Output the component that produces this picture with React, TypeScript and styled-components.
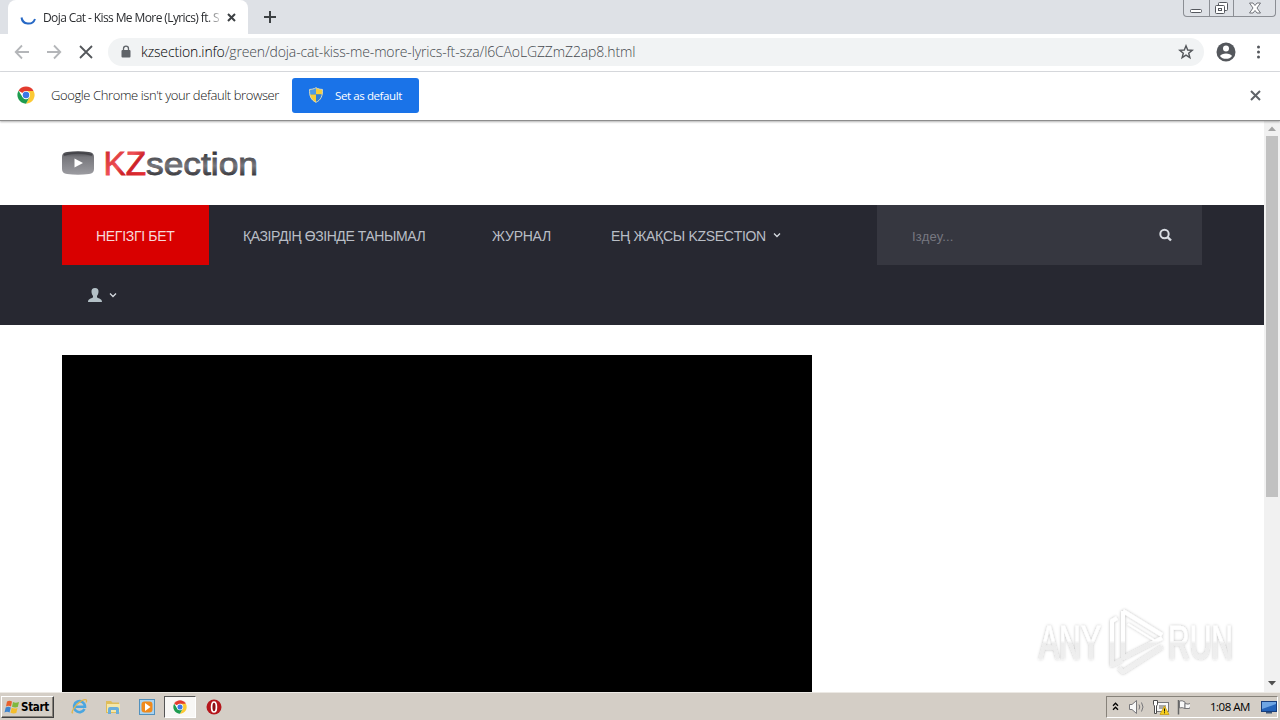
import React from 'react'
import styled, { createGlobalStyle } from 'styled-components'

const GlobalStyle = createGlobalStyle`
  * {
    box-sizing: border-box;
  }

  body {
    margin: 0;
    overflow: hidden;
    font-family: 'Open Sans', 'Noto Sans', sans-serif;
  }

  svg {
    display: block;
    flex-shrink: 0;
  }
`

const Desktop = styled.div`
  position: relative;
  display: flex;
  flex-direction: column;
  width: 1280px;
  height: 720px;
  overflow: hidden;
  background: #fff;
`

/* browser */

const TabStrip = styled.div`
  display: flex;
  height: 34px;
  padding-left: 8px;
  background: #dee1e6;
`

const Tab = styled.div`
  display: flex;
  align-items: center;
  width: 240px;
  padding: 0 11px 0 12px;
  background: #fff;
  border-radius: 8px 8px 0 0;
`

const TabTitle = styled.div`
  width: 178px;
  margin: 0 6px 0 7px;
  white-space: nowrap;
  font-size: 12px;
  letter-spacing: -0.6px;
  color: #2b2d30;
  mask-image: linear-gradient(to right, #000 163px, transparent 181px);
`

const NewTab = styled.div`
  display: flex;
  align-items: center;
  margin-left: 15px;
`

const WindowButtons = styled.div`
  display: flex;
  width: 93px;
  height: 17px;
  margin: 0 4px 0 auto;
  border: 1px solid #8b8e94;
  border-top: 0;
  border-radius: 0 0 4px 4px;
`

const WindowButton = styled.div<{ width: number }>`
  display: flex;
  justify-content: center;
  align-items: center;
  width: ${({ width }) => width}px;

  & + & {
    border-left: 1px solid #8b8e94;
  }
`

const Toolbar = styled.div`
  display: flex;
  align-items: center;
  height: 38px;
  padding: 0 14px 2px;
  border-bottom: 1px solid #dadce0;
`

const NavButtons = styled.div`
  display: flex;
  gap: 16px;
  margin-right: 14px;
`

const AddressBar = styled.div`
  display: flex;
  align-items: center;
  width: 1096px;
  height: 28px;
  padding: 0 10px 0 12px;
  border-radius: 14px;
  background: #f1f3f4;
`

const Url = styled.div`
  flex: 1;
  margin-left: 9px;
  white-space: nowrap;
  font-size: 14px;
  font-weight: 300;
  letter-spacing: -0.14px;
  color: #45494e;

  span {
    color: #000;
  }
`

const ToolbarEnd = styled.div`
  display: flex;
  align-items: center;
  gap: 14px;
  margin-left: 12px;
`

const InfoBar = styled.div`
  display: flex;
  align-items: center;
  height: 49px;
  padding: 0 19px 2px 17px;
  border-bottom: 1px solid #8d8d8d;
  box-shadow: 0 1px 2px rgba(0, 0, 0, 0.3);
  z-index: 1;
`

const InfoText = styled.div`
  width: 228px;
  margin: 0 13px 0 16px;
  white-space: nowrap;
  font-size: 13px;
  font-weight: 300;
  letter-spacing: -0.4px;
  color: #111;
`

const DefaultButton = styled.div`
  display: flex;
  align-items: center;
  width: 127px;
  height: 35px;
  padding-left: 16px;
  gap: 11px;
  border-radius: 3px;
  background: #1a73e8;
  color: #fff;
  font-size: 11.5px;
  letter-spacing: -0.4px;
  white-space: nowrap;
`

const InfoClose = styled.div`
  margin-left: auto;
`

/* page */

const Viewport = styled.div`
  display: flex;
  height: 571px;
`

const Page = styled.div`
  width: 1264px;
  overflow: hidden;
`

const Container = styled.div`
  width: 1140px;
  margin: 0 62px;
`

const SiteHeader = styled(Container)`
  display: flex;
  align-items: center;
  height: 84px;
`

const SiteNav = styled.div`
  height: 120px;
  background: #272831;
`

const NavRow = styled(Container)`
  display: flex;
  height: 60px;
`

const NavItem = styled.div<{ width: number; inset: number; spacing?: number; active?: boolean }>`
  display: flex;
  align-items: center;
  gap: 7px;
  width: ${({ width }) => width}px;
  padding: 1px 0 0 ${({ inset }) => inset}px;
  background: ${({ active }) => (active ? '#d90000' : 'transparent')};
  color: ${({ active }) => (active ? '#f6dada' : '#b9bec6')};
  font: 14px 'Liberation Sans', sans-serif;
  letter-spacing: ${({ spacing = 0 }) => spacing}px;
  white-space: nowrap;
`

const Search = styled.div`
  display: flex;
  align-items: center;
  justify-content: space-between;
  width: 325px;
  margin-left: auto;
  padding: 0 30px 0 35px;
  background: #363740;
  color: #777880;
  font: 13px 'Liberation Sans', sans-serif;
  letter-spacing: 0.2px;
`

const SearchLabel = styled.span`
  padding-top: 3px;
`

const Player = styled.div`
  width: 750px;
  height: 340px;
  margin: 30px 0 0 62px;
  background: #000;
`

const Scrollbar = styled.div`
  display: flex;
  flex-direction: column;
  align-items: center;
  width: 16px;
  padding: 5px 0 6px;
  background: #f1f1f1;
`

const Thumb = styled.div`
  width: 12px;
  height: 361px;
  margin: 5px 0 auto;
  background: #c1c1c1;
`

const Watermark = styled.svg`
  position: absolute;
  left: 1030px;
  top: 604px;
`

/* taskbar */

const Taskbar = styled.div`
  display: flex;
  align-items: center;
  height: 28px;
  padding: 0 2px 0 1px;
  background: #d4cec6;
  border-top: 1px solid #ece9e4;
`

const StartButton = styled.div`
  display: flex;
  align-items: center;
  gap: 1px;
  width: 53px;
  height: 22px;
  padding-left: 2px;
  border: 1px solid;
  border-color: #fff #404040 #404040 #fff;
  box-shadow: inset -1px -1px #87827a;
  font: bold 11.5px 'DejaVu Sans Condensed', 'DejaVu Sans', sans-serif;
  letter-spacing: -0.3px;
  color: #000;
`

const QuickLaunch = styled.div`
  display: flex;
  margin-left: 9px;
`

const TaskButton = styled.div<{ active?: boolean }>`
  display: flex;
  align-items: center;
  justify-content: center;
  width: 32px;
  height: 22px;
  margin-right: 1.8px;
  border: 1px solid;
  border-color: ${({ active }) => (active ? '#555 #fff #fff #555' : 'transparent')};
  background: ${({ active }) => (active ? '#f8f7f5' : 'transparent')};
`

const Tray = styled.div`
  display: flex;
  align-items: center;
  width: 172px;
  height: 22px;
  margin-left: auto;
  padding-left: 5px;
  border: 1px solid;
  border-color: #87827a #fff #fff #87827a;
`

const Clock = styled.div`
  width: 42px;
  margin: 0 9px 0 20px;
  font-size: 11.5px;
  letter-spacing: -0.5px;
  white-space: nowrap;
  color: #000;
`

const ChromeLogo = ({ size }: { size: number }) => (
  <svg width={size} height={size} viewBox="0 0 48 48">
    <circle cx="24" cy="24" r="23" fill="#fff" />
    <path d="M24 24 L4.1 12.5 A23 23 0 0 1 43.9 12.5 Z" fill="#e33b2e" />
    <path d="M24 13 H44.2 A23 23 0 0 1 24 47 L33.5 29.5 Z" fill="#fcc934" />
    <path d="M4.1 12.5 L14.5 29.5 L24 35 L33.5 29.5 L24 47 A23 23 0 0 1 4.1 12.5 Z" fill="#1e9c4f" />
    <circle cx="24" cy="24" r="11" fill="#fff" />
    <circle cx="24" cy="24" r="8.7" fill="#3b78e7" />
  </svg>
)

const Cross = ({ size, color, weight = 2 }: { size: number; color: string; weight?: number }) => (
  <svg width={size} height={size} viewBox={`0 0 ${size} ${size}`} stroke={color} strokeWidth={weight}>
    <path d={`M1 1 L${size - 1} ${size - 1} M${size - 1} 1 L1 ${size - 1}`} />
  </svg>
)

const Caret = () => (
  <svg width="8" height="8" viewBox="0 0 8 8" fill="none" stroke="#d6dbe0" strokeWidth="1.3">
    <path d="M1 1.500 L4 4.500 L7 1.500" />
  </svg>
)

const Shield = () => (
  <svg width="16" height="16" viewBox="0 0 16 16">
    <path d="M8 1 C6 2 3.5 2.3 1.5 2.3 C1.4 4.500 1.3 6 1.6 7.500 H8 Z" fill="#4d9be6" />
    <path d="M8 1 C10 2 12.5 2.3 14.5 2.3 C14.6 4.500 14.7 6 14.4 7.500 H8 Z" fill="#f7cd38" />
    <path d="M1.6 7.500 H8 V15.500 C4 13.500 2.1 11 1.6 7.500 Z" fill="#f7cd38" />
    <path d="M14.4 7.500 H8 V15.500 C12 13.500 13.9 11 14.4 7.500 Z" fill="#2f7fd8" />
    <path d="M8 0.7 C6 2 3.5 2.4 1.6 2.4 C1.3 9 3 13 8 15.3 C13 13 14.7 9 14.4 2.4 C12.5 2.4 10 2 8 0.7 Z" fill="none" stroke="#d8d8bc" />
  </svg>
)

const Logo = () => (
  <svg width="200" height="40" viewBox="0 0 200 40">
    <defs>
      <linearGradient id="box" x1="0" y1="0" x2="0" y2="1">
        <stop offset="0" stopColor="#424247" />
        <stop offset="0.25" stopColor="#77777c" />
        <stop offset="1" stopColor="#9c9ca1" />
      </linearGradient>
      <linearGradient id="red" x1="0" y1="0" x2="1" y2="1">
        <stop offset="0" stopColor="#c92025" />
        <stop offset="0.45" stopColor="#ef5055" />
        <stop offset="0.6" stopColor="#cc2127" />
        <stop offset="1" stopColor="#ef3339" />
      </linearGradient>
      <linearGradient id="grey" x1="0" y1="0" x2="0" y2="1">
        <stop offset="0.2" stopColor="#39393e" />
        <stop offset="0.55" stopColor="#77777d" />
        <stop offset="0.8" stopColor="#3d3d42" />
      </linearGradient>
    </defs>
    <path d="M5 9 Q16 7.500 27 9 Q32 9.500 32 14 V26 Q32 30.500 27 31 Q16 32.500 5 31 Q0 30.500 0 26 V14 Q0 9.500 5 9 Z" fill="url(#box)" />
    <path d="M2 12 Q16 8 30 12" fill="none" stroke="#45454a" strokeWidth="1.500" />
    <path d="M12.500 15.500 L21 20 L12.500 24.500 Z" fill="#fff" />
    <g fontFamily="Liberation Sans, sans-serif">
      <text x="41.500" y="32" fontSize="32.500" textLength="42.500" lengthAdjust="spacingAndGlyphs" fill="url(#red)" stroke="url(#red)" strokeWidth="0.800">KZ</text>
      <text x="84" y="32" fontSize="32" textLength="112" lengthAdjust="spacingAndGlyphs" fill="url(#grey)" stroke="url(#grey)" strokeWidth="0.900">section</text>
    </g>
  </svg>
)

export default function App() {
  return (
    <Desktop>
      <GlobalStyle />
      <TabStrip>
        <Tab>
          <svg width="16" height="16" viewBox="0 0 16 16" fill="none" stroke="#2668c5" strokeWidth="2">
            <path d="M1.500 8.500 A7 7 0 0 0 15 10" />
          </svg>
          <TabTitle>Doja Cat - Kiss Me More (Lyrics) ft. S</TabTitle>
          <Cross size={9} color="#3c4043" />
        </Tab>
        <NewTab>
          <svg width="14" height="14" viewBox="0 0 14 14" stroke="#3c4043" strokeWidth="2">
            <path d="M7 1 V13 M1 7 H13" />
          </svg>
        </NewTab>
        <WindowButtons>
          <WindowButton width={25}>
            <svg width="12" height="14" viewBox="0 0 12 14">
              <rect x="0.500" y="8.500" width="11" height="3" rx="1" fill="#fff" stroke="#55585e" />
            </svg>
          </WindowButton>
          <WindowButton width={25}>
            <svg width="13" height="14" viewBox="0 0 13 14" fill="#fff" stroke="#55585e">
              <rect x="3.500" y="1.500" width="9" height="8" rx="1" />
              <rect x="0.500" y="4.500" width="9" height="8" rx="1" />
              <rect x="3.500" y="7.500" width="3" height="2" />
            </svg>
          </WindowButton>
          <WindowButton width={42}>
            <svg width="12" height="12" viewBox="0 0 12 12" fill="#fff" stroke="#65686e" strokeWidth="0.900">
              <path d="M0.500 1 H4 L6 3.500 L8 1 H11.500 L8 6 L11.500 11 H8 L6 8.500 L4 11 H0.500 L4 6 Z" />
            </svg>
          </WindowButton>
        </WindowButtons>
      </TabStrip>

      <Toolbar>
        <NavButtons>
          <svg width="16" height="16" viewBox="0 0 16 16" fill="none" stroke="#b4b6b9" strokeWidth="1.800">
            <path d="M15 8 H2 M8 1.500 L1.700 8 L8 14.500" />
          </svg>
          <svg width="16" height="16" viewBox="0 0 16 16" fill="none" stroke="#b4b6b9" strokeWidth="1.800">
            <path d="M1 8 H14 M8 1.500 L14.300 8 L8 14.500" />
          </svg>
          <svg width="16" height="16" viewBox="0 0 16 16" stroke="#54575b" strokeWidth="1.800">
            <path d="M2 2 L14 14 M14 2 L2 14" />
          </svg>
        </NavButtons>
        <AddressBar>
          <svg width="12" height="14" viewBox="0 0 12 14">
            <rect x="1.500" y="5" width="9" height="7.500" rx="1" fill="#5f6368" />
            <path d="M3.500 6 V3.700 A2.500 2.500 0 0 1 8.500 3.700 V6" fill="none" stroke="#5f6368" strokeWidth="1.300" />
          </svg>
          <Url>
            <span>kzsection.info</span>/green/doja-cat-kiss-me-more-lyrics-ft-sza/l6CAoLGZZmZ2ap8.html
          </Url>
          <svg width="16" height="16" viewBox="0 0 16 16" fill="none" stroke="#54575b" strokeWidth="1.400">
            <path d="M8 1.800 L9.700 6 L14.200 6.300 L10.700 9.200 L11.900 13.700 L8 11.200 L4.100 13.700 L5.300 9.200 L1.800 6.300 L6.300 6 Z" />
          </svg>
        </AddressBar>
        <ToolbarEnd>
          <svg width="20" height="20" viewBox="0 0 20 20">
            <circle cx="10" cy="10" r="9.500" fill="#54575c" />
            <circle cx="10" cy="6.500" r="3" fill="#fff" />
            <path d="M4 14 C5.500 10.500 14.500 10.500 16 14 C13.500 17.800 6.500 17.800 4 14 Z" fill="#fff" />
          </svg>
          <svg width="16" height="16" viewBox="0 0 16 16" fill="#54575c">
            <circle cx="8.500" cy="3" r="1.500" />
            <circle cx="8.500" cy="8" r="1.500" />
            <circle cx="8.500" cy="13" r="1.500" />
          </svg>
        </ToolbarEnd>
      </Toolbar>

      <InfoBar>
        <ChromeLogo size={18} />
        <InfoText>Google Chrome isn't your default browser</InfoText>
        <DefaultButton>
          <Shield />
          Set as default
        </DefaultButton>
        <InfoClose>
          <Cross size={11} color="#5f6368" />
        </InfoClose>
      </InfoBar>

      <Viewport>
        <Page>
          <SiteHeader>
            <Logo />
          </SiteHeader>
          <SiteNav>
            <NavRow>
              <NavItem width={147} inset={34} spacing={-0.3} active>НЕГІЗГІ БЕТ</NavItem>
              <NavItem width={250} inset={34} spacing={-0.42}>ҚАЗІРДІҢ ӨЗІНДЕ ТАНЫМАЛ</NavItem>
              <NavItem width={126} inset={33} spacing={-0.25}>ЖУРНАЛ</NavItem>
              <NavItem width={230} inset={26} spacing={-0.3}>
                ЕҢ ЖАҚСЫ KZSECTION
                <Caret />
              </NavItem>
              <Search>
                <SearchLabel>Іздеу...</SearchLabel>
                <svg width="13" height="15" viewBox="0 0 13 15" fill="none" stroke="#d9dde3">
                  <circle cx="5.500" cy="6" r="4.200" strokeWidth="2" />
                  <path d="M8.300 8.800 L12 12.500" strokeWidth="2.400" />
                </svg>
              </Search>
            </NavRow>
            <NavRow>
              <NavItem width={80} inset={26}>
                <svg width="14" height="16" viewBox="0 0 14 16" fill="#b3c0c6">
                  <path d="M7 0 C9.500 0 10.700 1.500 10.500 4 C10.400 6 9.500 7 9 8 V9.500 C11 10.500 14 10.700 14 14 H0 C0 10.700 3 10.500 5 9.500 V8 C4.500 7 3.600 6 3.500 4 C3.300 1.500 4.500 0 7 0 Z" />
                </svg>
                <Caret />
              </NavItem>
            </NavRow>
          </SiteNav>
          <Player />
        </Page>
        <Scrollbar>
          <svg width="8" height="5" viewBox="0 0 8 5" fill="#a3a3a3"><path d="M0 5 L4 0.500 L8 5 Z" /></svg>
          <Thumb />
          <svg width="8" height="5" viewBox="0 0 8 5" fill="#505050"><path d="M0 0 L4 4.500 L8 0 Z" /></svg>
        </Scrollbar>
      </Viewport>

      <Taskbar>
        <StartButton>
          <svg width="16" height="16" viewBox="0 0 16 16">
            <path d="M3 2.500 Q5.500 1 8 2.500 L7 7.500 Q4.500 6 2 7.500 Z" fill="#e8602c" />
            <path d="M9 3 Q11.500 4.300 15 3 L13.800 8 Q11 9 8 7.700 Z" fill="#7fb83e" />
            <path d="M1.700 8.500 Q4.300 7 6.800 8.500 L5.600 13.500 Q3 12 0.500 13.500 Z" fill="#3f85cf" />
            <path d="M7.700 8.800 Q10.500 10.200 13.500 9 L12.300 14 Q9.500 15 6.500 13.700 Z" fill="#f4bd2b" />
          </svg>
          Start
        </StartButton>
        <QuickLaunch>
          <TaskButton>
            <svg width="17" height="17" viewBox="0 0 17 17" fill="none">
              <path d="M13.500 11 A5.500 5.500 0 1 1 14 8.800 H4.500" stroke="#4aa6e0" strokeWidth="2.600" />
              <path d="M2 14.500 C-1 17 3 7 11 2.500 C15 0.500 16.500 2 15 4.500" stroke="#e2b64a" strokeWidth="1.200" />
            </svg>
          </TaskButton>
          <TaskButton>
            <svg width="16" height="16" viewBox="0 0 16 16">
              <path d="M1 2 H6 L7.500 3.500 H14 V14 H1 Z" fill="#dfbd5a" />
              <path d="M2 5 H15 V13 H2 Z" fill="#f5e7a8" />
              <path d="M3 15 V10 Q3 8 5 8 H12 Q14 8 14 10 V15 H11 V11 H6 V15 Z" fill="#6aaedb" />
            </svg>
          </TaskButton>
          <TaskButton>
            <svg width="16" height="16" viewBox="0 0 16 16">
              <rect x="0.500" y="0.500" width="15" height="15" fill="#a9d3f1" stroke="#5291bd" />
              <rect x="2.500" y="2.500" width="11" height="11" rx="3" fill="#f08a1d" />
              <path d="M6 4 L11.500 8 L6 12 Z" fill="#fff" />
            </svg>
          </TaskButton>
          <TaskButton active>
            <ChromeLogo size={14} />
          </TaskButton>
          <TaskButton>
            <svg width="16" height="16" viewBox="0 0 16 16">
              <circle cx="8" cy="8" r="7.500" fill="#b5161c" />
              <ellipse cx="8" cy="8" rx="2.400" ry="5" fill="#8d1015" stroke="#fff" strokeWidth="1.700" />
            </svg>
          </TaskButton>
        </QuickLaunch>
        <Tray>
          <svg width="7" height="9" viewBox="0 0 7 9" fill="none" stroke="#000" strokeWidth="1.300">
            <path d="M1 3.800 L3.500 1.200 L6 3.800 M1 7.800 L3.500 5.200 L6 7.800" />
          </svg>
          <svg width="71" height="18" viewBox="0 0 71 18" fill="#f8f8f8" stroke="#77777a">
            <path d="M10.500 6.500 H13 L17.500 2.500 V15.500 L13 11.500 H10.500 Z" />
            <path d="M20 6.500 Q21.500 9 20 11.500 M22.500 4.500 Q25.500 9 22.500 13.500" fill="none" />
            <rect x="37.500" y="4.500" width="12" height="9" />
            <rect x="40" y="7" width="7" height="4" fill="#aaa" stroke="none" />
            <path d="M34.500 2.500 H38.500 V6.500 L37.500 8 V15.500 H35.500 V8 L34.500 6.500 Z" fill="#fff" stroke="#4c4c4c" />
            <path d="M45.500 8 L50 16.500 H41 Z" fill="#f7cf1c" stroke="#c99c10" strokeWidth="0.800" />
            <path d="M45.500 10.500 V13.500 M45.500 14.300 V15.300" stroke="#111" />
            <path d="M59.500 2 V16.500" stroke="#666" strokeWidth="1.500" />
            <path d="M60.500 3 Q63 2 66 4 V10.500 Q63 9 60.500 10 Z" />
            <path d="M66 5.500 Q68.500 7 73 5 L70.500 10.500 H66 Z" />
          </svg>
          <Clock>1:08 AM</Clock>
          <svg width="16" height="14" viewBox="0 0 16 14">
            <rect x="0.500" y="1.500" width="15" height="10" fill="#2463b9" stroke="#183e7c" />
            <path d="M1 2 H15 V4 L1 9 Z" fill="#6ea5e3" />
            <path d="M5 12 H11 V13.500 H5 Z" fill="#3d5679" />
          </svg>
        </Tray>
      </Taskbar>

      <Watermark width="234" height="76" viewBox="0 0 234 76">
        <defs>
          <filter id="soft" x="-10%" y="-10%" width="120%" height="120%">
            <feDropShadow dx="0" dy="0" stdDeviation="1.800" floodColor="#000" floodOpacity="0.280" />
          </filter>
          <linearGradient id="fade" x1="0" y1="0" x2="0" y2="76" gradientUnits="userSpaceOnUse">
            <stop offset="0.480" stopColor="#fff" />
            <stop offset="0.520" stopColor="#ededed" />
            <stop offset="1" stopColor="#f1f1f1" />
          </linearGradient>
        </defs>
        <g filter="url(#soft)" fill="url(#fade)">
          <g fontFamily="Liberation Sans Narrow, Liberation Sans, sans-serif" fontSize="49" stroke="url(#fade)" strokeWidth="0.500">
            <text x="9" y="54.500" textLength="62" lengthAdjust="spacingAndGlyphs">ANY</text>
            <text x="138" y="54.500" textLength="65" lengthAdjust="spacingAndGlyphs">RUN</text>
          </g>
          <g fill="none" stroke="url(#fade)" strokeWidth="4" strokeLinejoin="round">
            <path d="M93 7 V54 L132 34" />
            <path d="M93 7 L132 31" />
            <path d="M98 20 L127 38" strokeWidth="2" />
            <path d="M87 14 L82 17 V61 L92 56" />
            <path d="M89 64 L93 68 L132 43" />
          </g>
        </g>
      </Watermark>
    </Desktop>
  )
}
